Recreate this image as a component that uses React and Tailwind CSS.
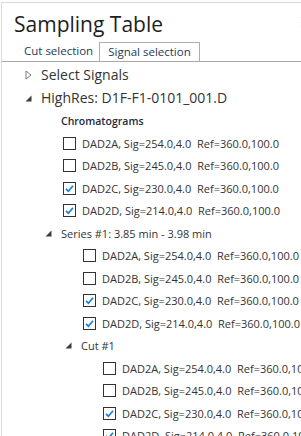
import React from "react";

// ---------- DATA ----------

const SIGNALS = [
  { name: "DAD2A", sig: "254.0,4.0", checked: false },
  { name: "DAD2B", sig: "245.0,4.0", checked: false },
  { name: "DAD2C", sig: "230.0,4.0", checked: true },
  { name: "DAD2D", sig: "214.0,4.0", checked: true },
];

const FONT = { fontFamily: '"Open Sans", "Noto Sans", sans-serif' };

// ---------- SMALL PIECES ----------

function Collapsed() {
  return (
    <svg width="7" height="10" viewBox="0 0 7 10" className="shrink-0">
      <path d="M1 1 L6 5 L1 9 Z" fill="none" stroke="#7c7c7c" strokeWidth="1" />
    </svg>
  );
}

function Expanded() {
  return (
    <svg width="7" height="7" viewBox="0 0 7 7" className="shrink-0">
      <path d="M6.5 0.5 L6.5 6.5 L0.5 6.5 Z" fill="#3d3d3d" />
    </svg>
  );
}

function Checkbox({ checked }) {
  return (
    <span className="w-[13px] h-[13px] shrink-0 border border-[#333333] bg-white flex items-center justify-center">
      {checked && (
        <svg width="11" height="11" viewBox="0 0 11 11">
          <path
            d="M2 5.8 L4.4 8.2 L9 2.8"
            fill="none"
            stroke="#1c7fd6"
            strokeWidth="1.7"
          />
        </svg>
      )}
    </span>
  );
}

function SignalRow({ s, indent }) {
  return (
    <div className={`h-[22.5px] flex items-center ${indent}`}>
      <Checkbox checked={s.checked} />
      <span className="ml-[6px] text-[11px] text-[#333333] whitespace-pre leading-none">
        {`${s.name}, Sig=${s.sig}  Ref=360.0,100.0`}
      </span>
    </div>
  );
}

function GroupRow({ label, indent }) {
  return (
    <div className={`h-[22.5px] flex items-center ${indent}`}>
      <span className="w-[16px] flex items-center">
        <Expanded />
      </span>
      <span className="text-[11px] text-[#333333] leading-none">{label}</span>
    </div>
  );
}

// ---------- PAGE ----------

export default function App() {
  return (
    <div className="w-[301px] h-[436px] bg-white overflow-hidden" style={FONT}>
      <div className="mt-[2px] ml-[1px] h-[434px] border-t border-l border-[#d3dce4] overflow-hidden">
        {/* Title */}
        <div className="flex items-center mt-[7px] pl-[12px] h-[28px]">
          <h1 className="text-[21px] leading-[28px] text-[#1e1e1e] whitespace-nowrap">
            Sampling Table
          </h1>
          <div className="flex-1" />
          <svg width="12" height="12" viewBox="0 0 12 12" className="shrink-0 mr-[-11px] mt-[-4px]">
            <path d="M1 1 L11 11 M11 1 L1 11" stroke="#8a8a8a" strokeWidth="1.2" />
          </svg>
        </div>

        {/* Tabs */}
        <div className="mt-[4px] flex items-end border-b border-[#a9a9a9] pl-[15px]">
          <div className="h-[19px] pl-[7px] pr-[6px] text-[11.5px] leading-[18px] text-[#1e395b] whitespace-nowrap">
            Cut selection
          </div>
          <div className="h-[19px] px-[8px] border-t border-l border-r border-[#acacac] text-[11.5px] leading-[18px] text-[#1e395b] bg-white whitespace-nowrap">
            Signal selection
          </div>
        </div>

        {/* Tree */}
        <div className="mt-[1px] whitespace-nowrap">
          <div className="h-[23px] flex items-center pl-[23px]">
            <span className="w-[16px] flex items-center">
              <Collapsed />
            </span>
            <span className="text-[14px] text-[#333333] leading-none">Select Signals</span>
          </div>

          <div className="h-[24px] flex items-center pl-[23px]">
            <span className="w-[16px] flex items-center">
              <Expanded />
            </span>
            <span className="text-[14px] text-[#333333] leading-none">
              HighRes: D1F-F1-0101_001.D
            </span>
          </div>

          <div className="h-[22px] flex items-center pl-[59px]">
            <span className="text-[10.5px] font-semibold text-[#1e2a3a] leading-none">
              Chromatograms
            </span>
          </div>

          {SIGNALS.map((s) => (
            <SignalRow key={"c" + s.name} s={s} indent="pl-[61px]" />
          ))}

          <GroupRow label="Series #1: 3.85 min - 3.98 min" indent="pl-[43px]" />
          {SIGNALS.map((s) => (
            <SignalRow key={"s" + s.name} s={s} indent="pl-[81px]" />
          ))}

          <GroupRow label="Cut #1" indent="pl-[63px]" />
          {SIGNALS.map((s) => (
            <SignalRow key={"k" + s.name} s={s} indent="pl-[101px]" />
          ))}
        </div>
      </div>
    </div>
  );
}
